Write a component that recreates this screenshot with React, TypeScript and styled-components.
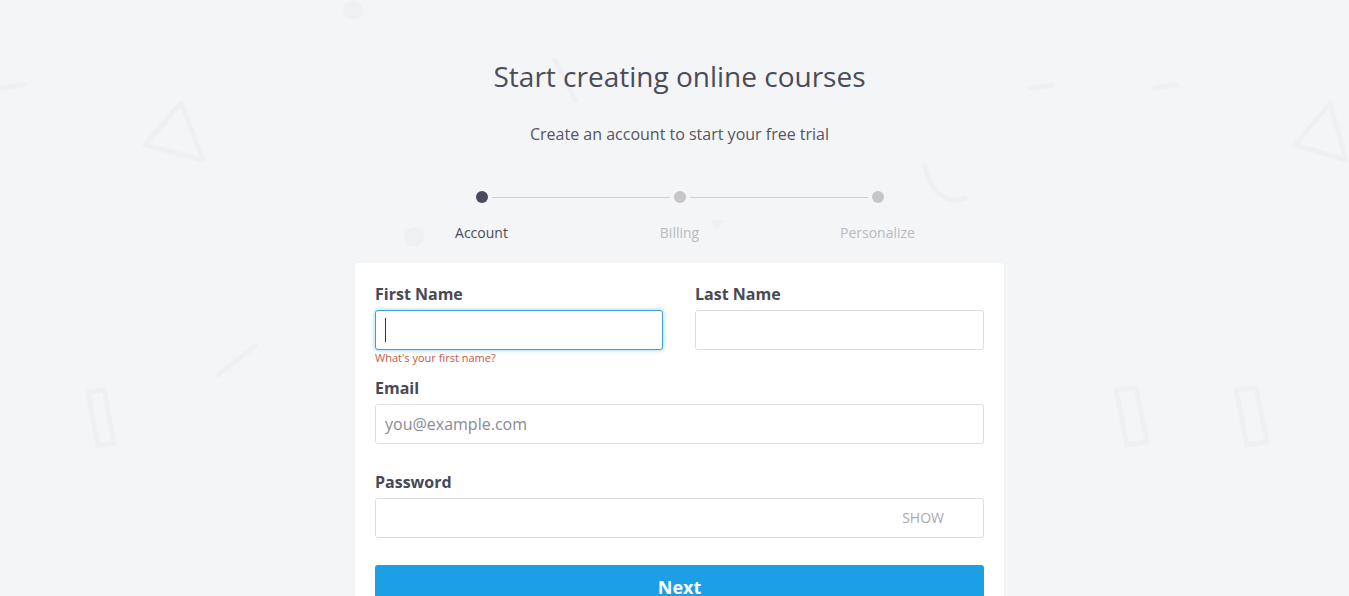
import React from 'react';
import styled, { createGlobalStyle } from 'styled-components';

const GlobalStyle = createGlobalStyle`
  html, body {
    margin: 0;
    padding: 0;
    background: #f4f5f7;
    font-family: 'Open Sans', 'Noto Sans', sans-serif;
    overflow: hidden;
  }
  * { box-sizing: border-box; }
`;

const Page = styled.div`
  position: relative;
  height: 596px;
  overflow: hidden;
  display: flex;
  flex-direction: column;
  align-items: center;
  padding-top: 57px;
  padding-left: 10px;
`;

// faint shapes drawn behind the whole page
const Backdrop = styled.svg`
  position: absolute;
  left: 0;
  top: 0;
  width: 1349px;
  height: 596px;
  z-index: 0;
  pointer-events: none;
`;

const Content = styled.div`
  position: relative;
  z-index: 1;
  display: flex;
  flex-direction: column;
  align-items: center;
`;

const Title = styled.h1`
  margin: 0;
  font-size: 28px;
  line-height: 38px;
  font-weight: 400;
  color: #4b4c57;
`;

const Subtitle = styled.p`
  margin: 28px 0 0;
  font-size: 16px;
  line-height: 22px;
  color: #55565f;
`;

const Stepper = styled.div`
  margin-top: 46px;
  display: grid;
  grid-template-columns: repeat(3, 198px);
`;

const Step = styled.div`
  display: flex;
  flex-direction: column;
  align-items: center;
`;

const Track = styled.div`
  width: 100%;
  display: flex;
  align-items: center;
  gap: 4px;
  height: 12px;
`;

const Line = styled.span<{ $off?: boolean }>`
  flex: 1;
  height: 1px;
  background: #cfd0d4;
  visibility: ${(p) => (p.$off ? 'hidden' : 'visible')};
`;

const Dot = styled.span<{ $active?: boolean }>`
  flex: none;
  width: 12px;
  height: 12px;
  border-radius: 50%;
  background: ${(p) => (p.$active ? '#4a4b5c' : '#c6c6c8')};
`;

const StepLabel = styled.span<{ $active?: boolean }>`
  margin-top: 20px;
  font-size: 14px;
  line-height: 20px;
  color: ${(p) => (p.$active ? '#4a4b55' : '#b9babd')};
`;

const Card = styled.form`
  margin-top: 20px;
  width: 649px;
  background: #fff;
  border-radius: 3px;
  box-shadow: 0 0 2px rgba(0, 0, 0, 0.06);
  padding: 20px 20px 30px;
`;

const Row = styled.div`
  display: grid;
  grid-template-columns: 288px 289px;
  column-gap: 32px;
`;

const Field = styled.div`
  display: flex;
  flex-direction: column;
  margin-bottom: 11px;
`;

const Label = styled.label`
  font-size: 16px;
  line-height: 22px;
  font-weight: 700;
  color: #484955;
  margin-bottom: 5px;
`;

const InputWrap = styled.div`
  position: relative;
`;

const Input = styled.input<{ $focused?: boolean }>`
  width: 100%;
  height: 40px;
  padding: 0 9px;
  border: 1px solid ${(p) => (p.$focused ? '#3f9fd6' : '#dcdde0')};
  border-radius: 3px;
  box-shadow: ${(p) => (p.$focused ? '0 0 4px rgba(40, 160, 225, 0.55)' : 'none')};
  font-family: inherit;
  font-size: 16px;
  color: #444;
  outline: none;
  caret-color: transparent;
  background: #fff;

  &::placeholder {
    color: #8a8b90;
  }
`;

const Caret = styled.span`
  position: absolute;
  left: 10px;
  top: 8px;
  width: 1px;
  height: 24px;
  background: #333;
`;

const Show = styled.span`
  position: absolute;
  right: 40px;
  top: 0;
  line-height: 40px;
  font-size: 14px;
  color: #a9aaae;
`;

const Hint = styled.span`
  height: 16px;
  font-size: 11px;
  line-height: 16px;
  color: #c9573f;
`;

const NextButton = styled.button`
  width: 100%;
  height: 44px;
  border: none;
  border-radius: 3px;
  background: #1d9fe6;
  color: #fff;
  font-family: inherit;
  font-size: 18px;
  font-weight: 700;
  cursor: pointer;
`;

const steps = ['Account', 'Billing', 'Personalize'];

const Decorations = () => (
  <Backdrop viewBox="0 0 1349 596">
    <g fill="none" stroke="#eff0f3" strokeWidth="5" strokeLinejoin="round" strokeLinecap="round">
      <path d="M181 103 L203 160 L145 145 Z" />
      <path d="M1330 103 L1346 160 L1295 145 Z" />
      <path d="M0 88 L24 85" />
      <path d="M1030 88 L1052 85" />
      <path d="M1155 88 L1176 85" />
      <path d="M218 375 L256 345" />
      <path d="M88 392 L104 390 L114 443 L98 446 Z" />
      <path d="M1116 390 L1136 388 L1147 442 L1127 445 Z" />
      <path d="M1236 390 L1256 388 L1267 442 L1247 445 Z" />
      <path d="M925 165 C 930 195 950 205 965 198" />
      <path d="M555 60 L575 100" />
    </g>
    <g fill="#eff0f3">
      <circle cx="353" cy="10" r="10" />
      <circle cx="414" cy="237" r="10" />
      <path d="M710 220 L724 220 L717 230 Z" />
    </g>
  </Backdrop>
);

export default function App() {
  return (
    <Page>
      <GlobalStyle />
      <Decorations />
      <Content>
        <Title>Start creating online courses</Title>
        <Subtitle>Create an account to start your free trial</Subtitle>
        <Stepper>
          {steps.map((s, i) => (
            <Step key={s}>
              <Track>
                <Line $off={i === 0} />
                <Dot $active={i === 0} />
                <Line $off={i === steps.length - 1} />
              </Track>
              <StepLabel $active={i === 0}>{s}</StepLabel>
            </Step>
          ))}
        </Stepper>
        <Card onSubmit={(e) => e.preventDefault()}>
          <Row>
            <Field>
              <Label>First Name</Label>
              <InputWrap>
                <Input $focused />
                <Caret />
              </InputWrap>
              <Hint>What's your first name?</Hint>
            </Field>
            <Field>
              <Label>Last Name</Label>
              <Input />
              <Hint />
            </Field>
          </Row>
          <Field>
            <Label>Email</Label>
            <Input placeholder="you@example.com" />
            <Hint />
          </Field>
          <Field>
            <Label>Password</Label>
            <InputWrap>
              <Input type="password" />
              <Show>SHOW</Show>
            </InputWrap>
            <Hint />
          </Field>
          <NextButton type="submit">Next</NextButton>
        </Card>
      </Content>
    </Page>
  );
}
